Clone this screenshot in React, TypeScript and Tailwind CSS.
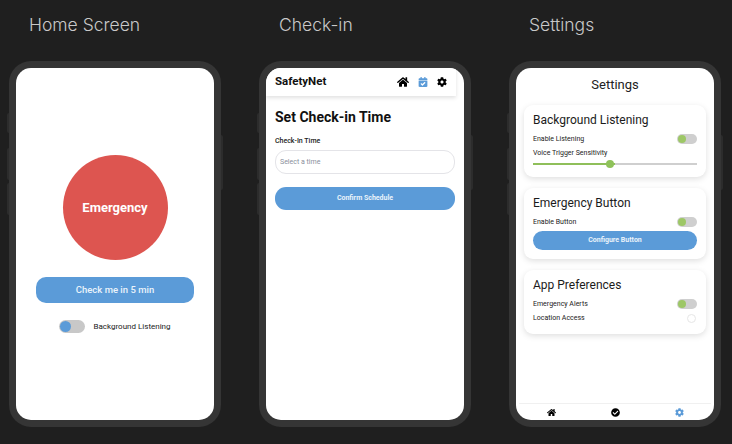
import type { ReactNode } from 'react';
import { FaCalendarCheck, FaCheckCircle, FaCog, FaHome } from 'react-icons/fa';

const roboto = "font-['Roboto',sans-serif]";

function Phone({ title, children }: { title: string; children: ReactNode }) {
  return (
    <div className="flex w-[212px] flex-col">
      <h2 className="mb-[23px] ml-[20px] h-[38px] pt-[13px] font-['Inter',sans-serif] text-[17.5px] leading-[24px] font-light text-[#c9c9c9]">
        {title}
      </h2>
      <div className="relative h-[366px] rounded-[22px] bg-[#353535] p-[7px]">
        <span className="absolute top-[52px] -left-[2px] h-[20px] w-[2px] rounded-l bg-[#2c2c2c]" />
        <span className="absolute top-[87px] -left-[2px] h-[32px] w-[2px] rounded-l bg-[#2c2c2c]" />
        <span className="absolute top-[122px] -left-[2px] h-[32px] w-[2px] rounded-l bg-[#2c2c2c]" />
        <span className="absolute top-[74px] -right-[2px] h-[55px] w-[2px] rounded-r bg-[#2c2c2c]" />
        <div className={`flex h-[352px] flex-col overflow-hidden rounded-[15px] bg-white ${roboto}`}>{children}</div>
      </div>
    </div>
  );
}

function Toggle({ color = '#9dc766' }: { color?: string }) {
  return (
    <div className="flex h-[10px] w-[20px] items-center rounded-full bg-[#cfcfcf] pl-[1px]">
      <div className="h-[8px] w-[8px] rounded-full" style={{ backgroundColor: color }} />
    </div>
  );
}

function Card({ title, children }: { title: string; children: ReactNode }) {
  return (
    <section className="mx-[8px] rounded-[9px] bg-white px-[9px] pt-[8px] pb-[9px] shadow-[0_2px_6px_rgba(0,0,0,0.13)]">
      <h3 className="mb-[5px] text-[12px] leading-[14px] text-[#1b1b1b]">{title}</h3>
      {children}
    </section>
  );
}

function Row({ label, children }: { label: string; children: ReactNode }) {
  return (
    <div className="flex h-[14px] items-center justify-between text-[7px] text-[#222]">
      <span>{label}</span>
      {children}
    </div>
  );
}

export default function App() {
  return (
    <div className="flex h-[444px] w-[732px] gap-[38px] overflow-hidden bg-[#1f1f1f] pl-[9px]">
      <Phone title="Home Screen">
        <div className="flex flex-1 flex-col items-center pt-[87px]">
          <div className="flex h-[105px] w-[105px] items-center justify-center rounded-full bg-[#dd5550] text-[13px] font-bold text-white">
            Emergency
          </div>
          <button className="mt-[17px] h-[26px] w-[158px] rounded-[10px] bg-[#5b9bd8] text-[9.5px] font-medium text-[#eaf3fb]">
            Check me in 5 min
          </button>
          <div className="mt-[17px] flex items-center gap-[8px] text-[8px] text-[#222]">
            <div className="flex h-[13px] w-[26px] items-center rounded-full bg-[#c8c8c8] pl-[1px]">
              <div className="h-[11px] w-[11px] rounded-full bg-[#5b9bd8]" />
            </div>
            <span>Background Listening</span>
          </div>
        </div>
      </Phone>

      <Phone title="Check-in">
        <header className="mr-[8px] flex h-[28px] items-center justify-between bg-white pr-[9px] pl-[9px] shadow-[0_2px_4px_rgba(0,0,0,0.12)]">
          <span className="text-[11.5px] font-bold text-[#111]">SafetyNet</span>
          <div className="flex items-center gap-[9px] text-[10px] text-black">
            <FaHome className="text-[12px]" />
            <FaCalendarCheck className="text-[#5b9bd8]" />
            <FaCog />
          </div>
        </header>
        <div className="px-[9px] pt-[13px]">
          <h1 className="text-[14px] leading-[16px] font-bold text-[#111]">Set Check-in Time</h1>
          <label className="mt-[11px] block text-[7px] leading-[10px] font-medium text-[#222]">Check-In Time</label>
          <div className="mt-[4px] flex h-[24px] items-center rounded-[11px] border border-[#e4e4e8] pl-[4px] text-[7px] text-[#8a8f9c]">
            Select a time
          </div>
          <button className="mt-[13px] h-[23px] w-full rounded-[11px] bg-[#5b9bd8] text-[7px] font-bold text-[#eaf3fb]">
            Confirm Schedule
          </button>
        </div>
      </Phone>

      <Phone title="Settings">
        <h2 className="pt-[9px] pb-[12px] text-center text-[13px] leading-[16px] text-[#222]">Settings</h2>
        <div className="flex flex-1 flex-col gap-[11px]">
          <Card title="Background Listening">
            <Row label="Enable Listening">
              <Toggle />
            </Row>
            <div className="mt-[3px] text-[7px] leading-[9px] text-[#222]">Voice Trigger Sensitivity</div>
            <div className="relative mt-[2px] flex h-[8px] items-center">
              <div className="h-[2px] w-1/2 bg-[#8fbf5a]" />
              <div className="h-[2px] w-1/2 bg-[#cfcfcf]" />
              <div className="absolute left-[73px] h-[8px] w-[8px] rounded-full bg-[#8fc25a]" />
            </div>
          </Card>
          <Card title="Emergency Button">
            <Row label="Enable Button">
              <Toggle />
            </Row>
            <button className="mt-[2px] block h-[19px] w-full rounded-[10px] bg-[#5b9bd8] text-[7px] font-bold text-[#eaf3fb]">
              Configure Button
            </button>
          </Card>
          <Card title="App Preferences">
            <Row label="Emergency Alerts">
              <Toggle />
            </Row>
            <Row label="Location Access">
              <div className="mr-[1px] h-[9px] w-[9px] rounded-full border border-[#e6e6e6] bg-white" />
            </Row>
          </Card>
        </div>
        <nav className="mx-[3px] grid h-[17px] grid-cols-3 items-center border-t border-[#f0f0f0] text-[9px] text-black">
          <FaHome className="mx-auto" />
          <FaCheckCircle className="mx-auto" />
          <FaCog className="mx-auto text-[#5b9bd8]" />
        </nav>
      </Phone>
    </div>
  );
}
